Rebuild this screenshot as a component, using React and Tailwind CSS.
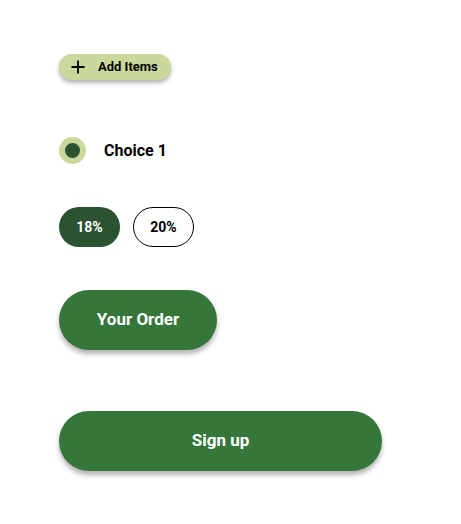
export default function App() {
  return (
    <div className="min-h-screen bg-white pl-[59px] pt-[54px] font-['Roboto',sans-serif]">
      <div className="flex flex-col items-start">
        <button className="flex h-[26px] w-[112px] items-center gap-[13px] rounded-full bg-[#cbd89b] pl-[12px] text-[13px] font-bold text-black shadow-[0_3px_4px_rgba(0,0,0,0.3)]">
          <svg width="14" height="14" viewBox="0 0 14 14" fill="none" stroke="black" strokeWidth="1.8">
            <path d="M7 0.5v13M0.5 7h13" />
          </svg>
          Add Items
        </button>

        <div className="mt-[57px] flex items-center gap-[18px]">
          <div className="flex h-[27px] w-[27px] items-center justify-center rounded-full bg-[#cbd89b]">
            <div className="h-[15px] w-[15px] rounded-full bg-[#2b5231]" />
          </div>
          <span className="text-[16px] font-bold text-black">Choice 1</span>
        </div>

        <div className="mt-[43px] flex gap-[13px]">
          <button className="flex h-[40px] w-[61px] items-center justify-center rounded-full bg-[#2b5231] text-[14px] font-bold text-white">
            18%
          </button>
          <button className="flex h-[40px] w-[61px] items-center justify-center rounded-full border border-black bg-white text-[14px] font-bold text-black">
            20%
          </button>
        </div>

        <button className="mt-[43px] flex h-[60px] w-[158px] items-center justify-center rounded-full bg-[#35763a] text-[17px] font-bold text-white shadow-[0_4px_5px_rgba(0,0,0,0.3)]">
          Your Order
        </button>

        <button className="mt-[61px] flex h-[60px] w-[323px] items-center justify-center rounded-full bg-[#35763a] text-[17px] font-bold text-white shadow-[0_4px_5px_rgba(0,0,0,0.3)]">
          Sign up
        </button>
      </div>
    </div>
  );
}
